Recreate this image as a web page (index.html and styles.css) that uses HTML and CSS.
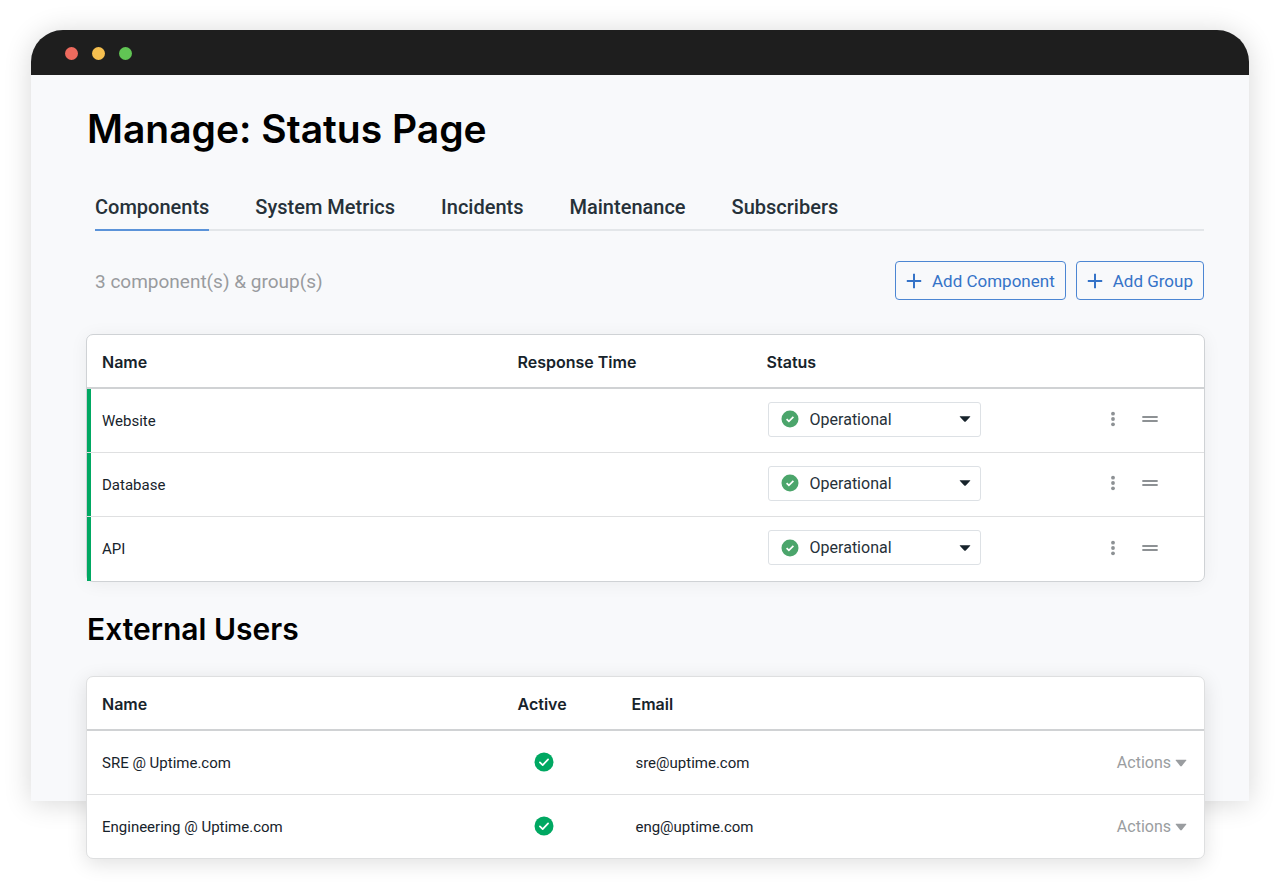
FILE: index.html
```html
<!DOCTYPE html>
<html lang="en">
<head>
<meta charset="utf-8">
<meta name="viewport" content="width=device-width, initial-scale=1">
<title>Manage: Status Page</title>
<link rel="stylesheet" href="styles.css">
</head>
<body>
<svg class="sprite" aria-hidden="true">
  <symbol id="check" viewBox="0 0 20 20"><circle cx="10" cy="10" r="9.5" fill="currentColor"/><path d="M5.9 10.3l2.8 2.8 5.4-5.8" fill="none" stroke="#fff" stroke-width="1.7" stroke-linecap="round" stroke-linejoin="round"/></symbol>
  <symbol id="check-small" viewBox="0 0 18 18"><circle cx="9" cy="9" r="8.5" fill="currentColor"/><path d="M5.6 9.1l2.3 2.3 4.5-4.5" fill="none" stroke="#fff" stroke-width="1.7"/></symbol>
  <symbol id="plus" viewBox="0 0 16 16"><path d="M8 .8v14.4M.8 8h14.4" fill="none" stroke="currentColor" stroke-width="2"/></symbol>
  <symbol id="caret" viewBox="0 0 12 8"><path d="M1 1.2h10q.6 0 .2.6L7 6.2q-1 1-2 0L.8 1.8q-.4-.6.2-.6z" fill="currentColor"/></symbol>
  <symbol id="caret-large" viewBox="0 0 12 8"><path d="M1 .8h10q.7 0 .2.7L6.8 7q-.8.8-1.6 0L.8 1.5Q.3.8 1 .8z" fill="currentColor"/></symbol>
  <symbol id="dots" viewBox="0 0 6 16"><circle cx="3" cy="2.7" r="1.9"/><circle cx="3" cy="8" r="1.9"/><circle cx="3" cy="13.3" r="1.9"/></symbol>
  <symbol id="grip" viewBox="0 0 16 8"><path d="M1 2h14M1 6h14" fill="none" stroke="currentColor" stroke-width="1.8" stroke-linecap="round"/></symbol>
</svg>
<div class="window">
  <div class="titlebar"><span class="light red"></span><span class="light yellow"></span><span class="light green"></span></div>
  <main class="content">
    <h1 class="title">Manage: Status Page</h1>
    <nav class="tabs">
      <a class="tab active" href="#components" aria-current="page">Components</a>
      <a class="tab" href="#metrics">System Metrics</a>
      <a class="tab" href="#incidents">Incidents</a>
      <a class="tab" href="#maintenance">Maintenance</a>
      <a class="tab" href="#subscribers">Subscribers</a>
    </nav>
    <div class="toolbar">
      <p class="count">3 component(s) &amp; group(s)</p>
      <button class="add" type="button"><svg class="plus"><use href="#plus"/></svg>Add Component</button>
      <button class="add" type="button"><svg class="plus"><use href="#plus"/></svg>Add Group</button>
    </div>
    <section class="card">
      <table class="table components">
        <thead><tr><th class="c-name" scope="col">Name</th><th class="c-time" scope="col">Response Time</th><th scope="col">Status</th><th class="c-tools" aria-label="Tools"></th></tr></thead>
        <tbody>
          <tr><td>Website</td><td></td>
            <td class="control-cell"><span class="status"><svg class="status-icon"><use href="#check-small"/></svg><select class="select" aria-label="Website status"><option>Operational</option></select><svg class="caret"><use href="#caret"/></svg></span></td>
            <td class="control-cell"><span class="tools"><button class="icon" type="button" aria-label="More options"><svg class="dots"><use href="#dots"/></svg></button><button class="icon" type="button" aria-label="Reorder"><svg class="grip"><use href="#grip"/></svg></button></span></td></tr>
          <tr><td>Database</td><td></td>
            <td class="control-cell"><span class="status"><svg class="status-icon"><use href="#check-small"/></svg><select class="select" aria-label="Database status"><option>Operational</option></select><svg class="caret"><use href="#caret"/></svg></span></td>
            <td class="control-cell"><span class="tools"><button class="icon" type="button" aria-label="More options"><svg class="dots"><use href="#dots"/></svg></button><button class="icon" type="button" aria-label="Reorder"><svg class="grip"><use href="#grip"/></svg></button></span></td></tr>
          <tr><td>API</td><td></td>
            <td class="control-cell"><span class="status"><svg class="status-icon"><use href="#check-small"/></svg><select class="select" aria-label="API status"><option>Operational</option></select><svg class="caret"><use href="#caret"/></svg></span></td>
            <td class="control-cell"><span class="tools"><button class="icon" type="button" aria-label="More options"><svg class="dots"><use href="#dots"/></svg></button><button class="icon" type="button" aria-label="Reorder"><svg class="grip"><use href="#grip"/></svg></button></span></td></tr>
        </tbody>
      </table>
    </section>
    <h2 class="subtitle">External Users</h2>
    <section class="card users-card">
      <table class="table users">
        <thead><tr><th class="c-name" scope="col">Name</th><th class="c-active" scope="col">Active</th><th scope="col">Email</th><th class="c-tools" aria-label="Actions"></th></tr></thead>
        <tbody>
          <tr><td>SRE @ Uptime.com</td><td class="check-cell"><svg class="check" role="img" aria-label="Active"><use href="#check"/></svg></td><td class="email">sre@uptime.com</td><td class="actions-cell"><button class="actions" type="button">Actions<svg class="caret"><use href="#caret-large"/></svg></button></td></tr>
          <tr><td>Engineering @ Uptime.com</td><td class="check-cell"><svg class="check" role="img" aria-label="Active"><use href="#check"/></svg></td><td class="email">eng@uptime.com</td><td class="actions-cell"><button class="actions" type="button">Actions<svg class="caret"><use href="#caret-large"/></svg></button></td></tr>
        </tbody>
      </table>
    </section>
  </main>
</div>
</body>
</html>
```
FILE: styles.css
```css
* { box-sizing: border-box; }
body { margin: 0; padding: 30px 28px 86px 31px; background: #fff; color: #17232b; font: 15px/20px Roboto, sans-serif; }
svg { display: block; flex: none; }
button, select { font: inherit; }
.sprite { position: absolute; width: 0; height: 0; }
.window { border-radius: 32px 32px 0 0; background: #f8f9fb; box-shadow: 0 2px 28px rgba(0, 0, 0, .16); }
.titlebar { display: flex; align-items: center; gap: 14px; height: 45px; padding: 1px 34px 0; border-radius: 32px 32px 0 0; background: #1e1e1e; }
.light { width: 13px; height: 13px; border-radius: 50%; }
.red { background: #ed6a5e; }
.yellow { background: #f5bf4f; }
.green { background: #61c554; }
.content { display: flex; flex-direction: column; padding: 30px 44px 0 55px; }
.title { margin: 0; padding-left: 1px; font: 600 39px/48px Inter, sans-serif; color: #000; }
.tabs { display: flex; gap: 46px; margin: 42px 1px 0 9px; border-bottom: 2px solid #e3e6e9; }
.tab { margin-bottom: -2px; padding-bottom: 9px; border-bottom: 2px solid transparent; color: #263139; font-size: 20px; line-height: 25px; font-weight: 500; text-decoration: none; }
.tab.active { border-bottom-color: #5b93d9; }
.toolbar { display: flex; align-items: center; gap: 10px; margin: 30px 1px 0 9px; }
.count { flex: 1; margin: 0; padding-top: 2px; color: #999b9e; font-size: 19px; line-height: 26px; }
.add { display: flex; align-items: center; gap: 10px; height: 39px; padding: 0 10px; border: 1px solid #4c86d3; border-radius: 4px; background: transparent; color: #3573c8; font-size: 17px; }
.plus { width: 16px; height: 16px; }
.card { margin-top: 34px; border: 1px solid #cfd2d5; border-radius: 7px; background: #fff; box-shadow: 0 2px 18px rgba(0, 0, 0, .06); }
.table { width: 100%; border-spacing: 0; table-layout: fixed; }
th { height: 54px; padding: 1px 15px 0; border-bottom: 2px solid #d0d2d4; text-align: left; font: 600 16px/20px Inter, sans-serif; }
td { height: 64px; padding: 0 15px; border-bottom: 1px solid #dfe0e1; }
tbody tr:last-child td { border-bottom: 0; }
.c-name { width: 37.2%; }
.c-time { width: 22.3%; }
.c-active { width: 10.2%; }
.c-tools { width: 15%; }
.components td:first-child { box-shadow: inset 4px 0 #00a862; }
.control-cell { padding-bottom: 3px; }
.status { display: flex; align-items: center; gap: 11px; width: 213px; height: 35px; margin-left: 1px; padding: 0 9px 0 12px; border: 1px solid #dde1e5; border-radius: 3px; }
.status-icon { width: 18px; height: 18px; color: #4ba56b; }
.select { flex: 1; min-width: 0; padding: 1px 0 0; border: 0; appearance: none; background: transparent; color: #263139; font-size: 16px; }
.caret { width: 12px; height: 8px; }
.tools { display: flex; justify-content: flex-end; align-items: center; gap: 26px; padding-right: 31px; }
.icon { padding: 0; border: 0; background: none; color: #8d9194; fill: currentColor; }
.dots { width: 6px; height: 16px; }
.grip { width: 16px; height: 8px; }
.subtitle { margin: 29px 0 0; padding-left: 1px; font: 600 30px/36px Inter, sans-serif; color: #000; }
.users-card { margin-top: 29px; margin-bottom: -58px; border-color: #dedfe0; box-shadow: 0 5px 20px rgba(0, 0, 0, .12); }
.users tr:last-child td { height: 63px; }
.check-cell { padding-bottom: 2px; padding-left: 31px; }
.check { width: 20px; height: 20px; color: #00a862; }
.email { padding-left: 19px; }
.actions-cell { padding-right: 17px; }
.actions { display: flex; align-items: center; gap: 4px; margin-left: auto; padding: 0; border: 0; background: none; color: #9a9da0; font-size: 16px; }
```
